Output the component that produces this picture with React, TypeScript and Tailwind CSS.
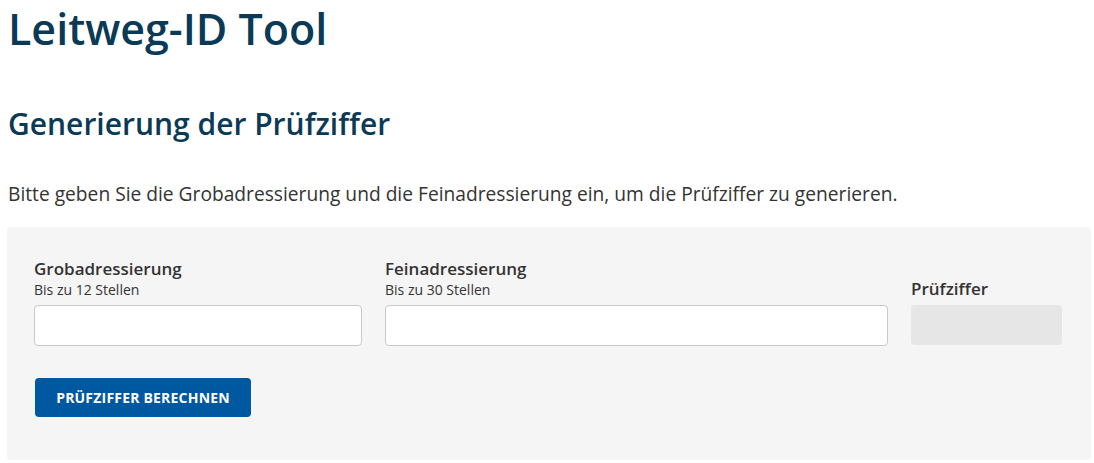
import { Fragment } from "react";

const App = () => {
    return (
        <Fragment>
            <div className="min-h-screen bg-white px-2 text-[#333] font-['Open_Sans',sans-serif]">
                <h1 className="text-[43px] leading-[57px] font-semibold text-[#0b3a56]">
                    Leitweg-ID Tool
                </h1>
                <h2 className="mt-[47px] text-[30px] leading-[40px] font-semibold text-[#0b3a56]">
                    Generierung der Prüfziffer
                </h2>
                <p className="mt-[37px] text-[19.2px] leading-[26px]">
                    Bitte geben Sie die Grobadressierung und die Feinadressierung ein, um die Prüfziffer zu generieren.
                </p>
                <div className="-ml-px mt-[20px] w-[1084px] h-[233px] rounded bg-[#f5f5f5] pl-[27px] pr-[29px] pt-[30px]">
                    <div className="flex items-end gap-[23px]">
                        <div className="w-[328px]">
                            <label className="block text-[17px] leading-[24px] font-semibold">Grobadressierung</label>
                            <div className="text-[14px] leading-[18px] mb-[6px]">Bis zu 12 Stellen</div>
                            <input className="block w-full h-[41px] rounded bg-white border border-[#c8c8c8]" />
                        </div>
                        <div className="w-[503px]">
                            <label className="block text-[17px] leading-[24px] font-semibold">Feinadressierung</label>
                            <div className="text-[14px] leading-[18px] mb-[6px]">Bis zu 30 Stellen</div>
                            <input className="block w-full h-[41px] rounded bg-white border border-[#c8c8c8]" />
                        </div>
                        <div className="w-[151px]">
                            <label className="block text-[17px] leading-[24px] font-semibold mb-[4px]">Prüfziffer</label>
                            <div className="h-[40px] rounded bg-[#e6e6e6] mb-px" />
                        </div>
                    </div>
                    <button className="mt-[32px] ml-px h-[39px] w-[216px] rounded bg-[#0058a0] text-white text-[14px] font-bold tracking-[0.2px]">
                        PRÜFZIFFER BERECHNEN
                    </button>
                </div>
            </div>
        </Fragment>
    );
};

export default App;
